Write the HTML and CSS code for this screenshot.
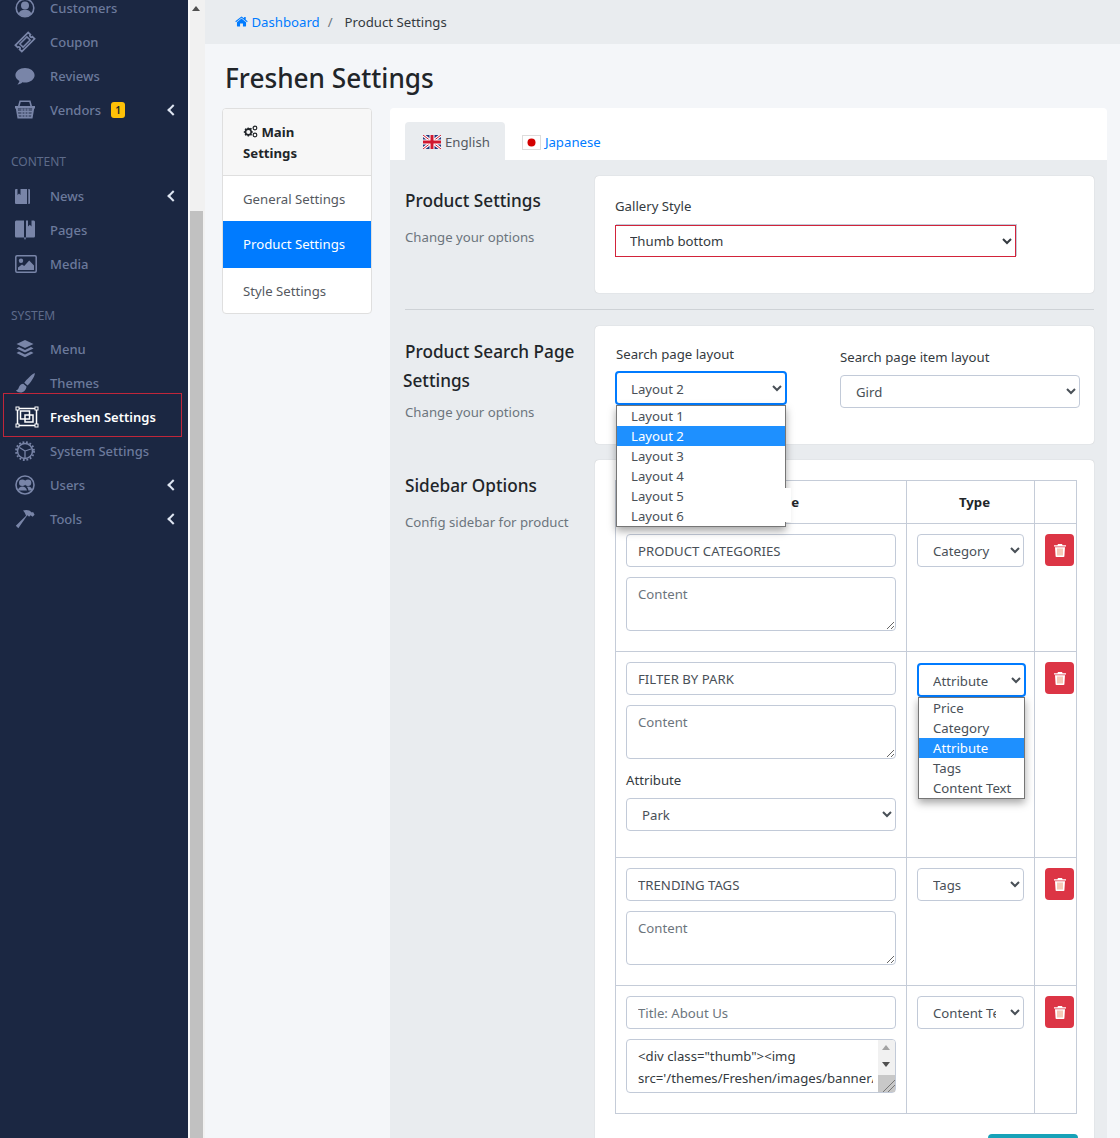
FILE: index.html
```html
<!DOCTYPE html>
<html lang="en">
  <head>
    <meta charset="UTF-8" />
    <meta name="viewport" content="width=device-width, initial-scale=1.0" />
    <title>Freshen Settings</title>
    <link rel="stylesheet" href="styles.css">
  </head>
  <body>
    <aside class="sidebar">
      <ul class="menu">
        <li class="item"><svg viewBox="0 0 20 20"><circle cx="10" cy="10" r="8.8" fill="none" stroke="currentColor" stroke-width="1.6"/><circle cx="10" cy="7.6" r="4" fill="currentColor"/><path d="M3.6 15.6c1-3 3.6-3.9 6.4-3.900s5.400.9 6.400 3.900c-1.500 1.900-3.800 3-6.400 3s-4.900-1.100-6.400-3z" fill="currentColor"/></svg><span>Customers</span></li>
        <li class="item"><svg viewBox="0 0 20 20"><g transform="rotate(-45 10 10)" fill="none" stroke="currentColor"><path d="M1 5.500h18v3a1.500 1.500 0 0 0 0 3v3H1v-3a1.500 1.500 0 0 0 0-3z" stroke-width="1.800"/><rect x="5" y="7.700" width="10" height="4.600" stroke-width="1.500"/></g></svg><span>Coupon</span></li>
        <li class="item"><svg viewBox="0 0 20 20"><path d="M10 2c5.300 0 9.600 3.200 9.600 7.300S15.300 16.600 10 16.600c-.9 0-1.800-.1-2.600-.3C6 17.800 4 18.500 2.400 18.400c1-.9 1.800-2.100 2-3.400C2 13.700.4 11.600.4 9.300.4 5.200 4.700 2 10 2z" fill="currentColor"/></svg><span>Reviews</span></li>
        <li class="item"><svg viewBox="0 0 20 20"><path d="M4.500.500h11l1.500 5.500h3v2.500h-.8L17.500 18.500h-15L.8 8.500H0V6h3zM5.700 2 4.700 6h10.600l-1-4zM2.800 8.500l1.200 8.500h12l1.200-8.500z" fill="currentColor" fill-rule="evenodd"/><path d="M3 9h14v8H4zM3 9" fill="currentColor" opacity=".55"/><path d="M3 11.500h14M3 14.500h14M7 8.500V17M10 8.500V17M13 8.500V17" stroke="currentColor" stroke-width="1.200"/></svg><span>Vendors</span><b class="badge">1</b><i class="arrow"></i></li>
      </ul>
      <h6 class="group">CONTENT</h6>
      <ul class="menu">
        <li class="item"><svg viewBox="0 0 20 20"><path d="M1 3h11v15H1a1 1 0 0 1-1-1V4a1 1 0 0 1 1-1zM2.500 3v6L4 7.600 5.500 9V3zM13.300 3H14a1 1 0 0 1 1 1v13a1 1 0 0 1-1 1h-.7z" fill="currentColor" fill-rule="evenodd"/></svg><span>News</span><i class="arrow"></i></li>
        <li class="item"><svg viewBox="0 0 20 20"><path d="M0 2C0 1 .8.500 1.500.500H9v17H1.500C.8 17.500 0 17 0 16zM11 .500h2v6l1.800-1.800L16.500 6.500v-6h2c.8 0 1.500.5 1.500 1.500v14c0 1-.7 1.500-1.500 1.500H11z" fill="currentColor" fill-rule="evenodd"/><path d="M8.800 17.500h2.400L10 20z" fill="currentColor"/></svg><span>Pages</span></li>
        <li class="item"><svg viewBox="0 0 20 20"><rect x=".8" y="1.800" width="20.400" height="16.400" rx="1.200" fill="none" stroke="currentColor" stroke-width="1.500"/><circle cx="6" cy="6.800" r="2.200" fill="currentColor"/><path d="M3 16v-2.500l4-3 2.200 1.500 5-5.500L19 11.500V16z" fill="currentColor"/></svg><span>Media</span></li>
      </ul>
      <h6 class="group short">SYSTEM</h6>
      <ul class="menu">
        <li class="item"><svg viewBox="0 0 20 20"><path d="M10 1l8.500 4L10 9 1.500 5z" fill="currentColor"/><path d="M4 8 10 10.900 16 8l2.500 1.400L10 13.600 1.500 9.400zM4 12.600l6 2.900 6-2.900 2.500 1.400L10 18.300 1.500 14z" fill="currentColor"/></svg><span>Menu</span></li>
        <li class="item"><svg viewBox="0 0 20 20"><path d="M19.500 0c.6.600.2 2.200-.6 3.800-1.500 3-4 6.700-6.400 8.700L9.300 9.700C11.300 6.700 17 1.200 19.500 0zM8.300 10.700l3.200 2.800c-.2 3.300-2.700 6-6 6-1.900 0-3.700-.7-4.500-2.200 1.600-.2 2.200-1.100 2.700-2.600.9-2.500 2.600-4 4.600-4z" fill="currentColor"/></svg><span>Themes</span></li>
        <li class="item active">
          <svg class="frame" viewBox="0 0 24 22"><rect x="2.500" y="2.500" width="19" height="17" fill="none" stroke="#fff" stroke-width="1.500"/><rect x="5.500" y="5" width="9" height="8" fill="none" stroke="#fff" stroke-width="1.500"/><rect x="10" y="9" width="8" height="7" fill="none" stroke="#fff" stroke-width="1.500"/><rect x="1" y="1" width="3" height="3" fill="#1b2742" stroke="#fff"/><rect x="20" y="1" width="3" height="3" fill="#1b2742" stroke="#fff"/><rect x="1" y="18" width="3" height="3" fill="#1b2742" stroke="#fff"/><rect x="20" y="18" width="3" height="3" fill="#1b2742" stroke="#fff"/></svg>
          <span>Freshen Settings</span>
        </li>
        <li class="item"><svg viewBox="0 0 20 20"><circle cx="10" cy="10" r="7.500" fill="none" stroke="currentColor" stroke-width="1.500"/><circle cx="10" cy="10" r="9" fill="none" stroke="currentColor" stroke-width="1.800" stroke-dasharray="1.800 1.800"/><path d="M10 10 4.500 6.500M10 10l6-2M10 10v7.500" stroke="currentColor" stroke-width="1.300"/></svg><span>System Settings</span></li>
        <li class="item"><svg viewBox="0 0 20 20"><circle cx="10" cy="10" r="9" fill="none" stroke="currentColor" stroke-width="1.600"/><circle cx="7.300" cy="7.800" r="3.300" fill="currentColor"/><circle cx="13" cy="7.800" r="3.300" fill="currentColor"/><path d="M2.800 15.500c.5-2.800 2.600-4 4.600-4s4.100 1.200 4.600 4zM13.300 11.500c2 0 3.700 1.200 4.100 4h-4c-.2-1.500-.8-2.900-1.800-3.700z" fill="currentColor"/></svg><span>Users</span><i class="arrow"></i></li>
        <li class="item"><svg viewBox="0 0 20 20"><path d="M8 1.500c3-1.200 6.800-.7 8.800 1.900l1.300-.4 1.500 2.700-2 2-2-1.500-1.500 1.500-1.800-1.400L3.300 19.300.8 16.800 11 6.700C10.500 5 9.500 3 8 1.500z" fill="currentColor"/></svg><span>Tools</span><i class="arrow"></i></li>
      </ul>
    </aside>

    <div class="scrollbar">
      <i class="scroll-up"></i>
      <div class="scroll-thumb"></div>
    </div>

    <main class="page">
      <nav class="crumbs">
        <a href="#"><svg class="home" viewBox="0 0 20 16"><path d="M10 3.500 3 9.300V15a.6.6 0 0 0 .6.6h4.200v-4.500h4.400v4.500h4.200a.6.6 0 0 0 .6-.6V9.300zM19.500 7.700 16.500 5.200V1h-2.500v2.100L10 .3.500 7.700l1 1.300L10 2.200 18.500 9z" fill="currentColor"/></svg> Dashboard</a>
        <span class="slash">/</span>
        <span>Product Settings</span>
      </nav>
      <h1>Freshen Settings</h1>

      <div class="columns">
        <div class="side-card">
          <div class="side-head"><svg class="gears" viewBox="0 0 16 14"><path d="M6 3 7.500 3.500l1-.6 1 1-.6 1L9.500 6.500 10.500 7v1.200l-1 .4-.4 1 .6 1-1 1-1-.6L6.800 11.400 6.400 12.500H5l-.4-1.100-1-.4-1 .6-1-1 .6-1-.4-1L.7 8.200V7l1.100-.5.400-1-.6-1 1-1 1 .6 1-.5.4-1H6zM5.700 5.300a2.200 2.200 0 1 0 0 4.400 2.200 2.200 0 0 0 0-4.400z" fill="currentColor" fill-rule="evenodd"/><circle cx="12.800" cy="3.300" r="2" fill="none" stroke="currentColor" stroke-width="1.300"/><circle cx="12.800" cy="10.700" r="2" fill="none" stroke="currentColor" stroke-width="1.300"/></svg> Main Settings</div>
          <a class="side-link" href="#">General Settings</a>
          <a class="side-link current" href="#">Product Settings</a>
          <a class="side-link" href="#">Style Settings</a>
        </div>

        <div class="main-card">
          <div class="tabs">
            <a class="tab open" href="#">
              <svg class="flag" viewBox="0 0 18 14"><rect width="18" height="14" fill="#24357a"/><path d="M0 0 18 14M18 0 0 14" stroke="#fff" stroke-width="3"/><path d="M0 0 18 14M18 0 0 14" stroke="#d0182f" stroke-width="1"/><path d="M9 0v14M0 7h18" stroke="#fff" stroke-width="5"/><path d="M9 0v14M0 7h18" stroke="#d0182f" stroke-width="3"/></svg>
              English
            </a>
            <a class="tab" href="#">
              <svg class="flag jp" viewBox="0 0 19 15"><rect x=".5" y=".5" width="18" height="14" fill="#fff" stroke="#ddd"/><circle cx="9.500" cy="7.500" r="4" fill="#d30000"/></svg>
              Japanese
            </a>
          </div>

          <div class="tab-body">
            <section class="row first">
              <div class="intro">
                <h3>Product Settings</h3>
                <p>Change your options</p>
              </div>
              <div class="box gallery">
                <label>Gallery Style</label>
                <select class="plain"><option>Thumb bottom</option></select>
              </div>
            </section>

            <section class="row second">
              <div class="intro">
                <h3 class="wrapped">Product Search Page Settings</h3>
                <p>Change your options</p>
              </div>
              <div class="box search">
                <div class="field">
                  <label>Search page layout</label>
                  <select class="input focus"><option>Layout 2</option></select>
                </div>
                <div class="field lower">
                  <label>Search page item layout</label>
                  <select class="input"><option>Gird</option></select>
                </div>
              </div>
            </section>

            <section class="row third">
              <div class="intro">
                <h3>Sidebar Options</h3>
                <p>Config sidebar for product</p>
              </div>
              <div class="box options">
                <table>
                  <thead>
                    <tr><th>Block Title</th><th>Type</th><th></th></tr>
                  </thead>
                  <tbody>
                    <tr>
                      <td>
                        <input class="input" value="PRODUCT CATEGORIES">
                        <textarea class="input area" placeholder="Content"></textarea>
                      </td>
                      <td><select class="input"><option>Category</option></select></td>
                      <td><button class="del"><svg viewBox="0 0 12 13"><path d="M4 0h4l.6 1.200H12v1.300H0V1.200h3.400zM1 3.200h10l-.6 9a.8.8 0 0 1-.8.800H2.400a.8.8 0 0 1-.8-.8z" fill="#fff"/><rect x="3" y="4.500" width="6" height="7" fill="#f6c9b8"/></svg></button></td>
                    </tr>
                    <tr>
                      <td>
                        <input class="input" value="FILTER BY PARK">
                        <textarea class="input area" placeholder="Content"></textarea>
                        <label class="attr">Attribute</label>
                        <select class="input attr-select"><option>Park</option></select>
                      </td>
                      <td><select class="input focus wide"><option>Attribute</option></select></td>
                      <td><button class="del"><svg viewBox="0 0 12 13"><path d="M4 0h4l.6 1.200H12v1.300H0V1.200h3.400zM1 3.200h10l-.6 9a.8.8 0 0 1-.8.800H2.400a.8.8 0 0 1-.8-.8z" fill="#fff"/><rect x="3" y="4.500" width="6" height="7" fill="#f6c9b8"/></svg></button></td>
                    </tr>
                    <tr>
                      <td>
                        <input class="input" value="TRENDING TAGS">
                        <textarea class="input area" placeholder="Content"></textarea>
                      </td>
                      <td><select class="input"><option>Tags</option></select></td>
                      <td><button class="del"><svg viewBox="0 0 12 13"><path d="M4 0h4l.6 1.200H12v1.300H0V1.200h3.400zM1 3.200h10l-.6 9a.8.8 0 0 1-.8.800H2.400a.8.8 0 0 1-.8-.8z" fill="#fff"/><rect x="3" y="4.500" width="6" height="7" fill="#f6c9b8"/></svg></button></td>
                    </tr>
                    <tr>
                      <td>
                        <input class="input" placeholder="Title: About Us">
                        <div class="code-wrap">
                          <textarea class="input area code" wrap="off">&lt;div class="thumb"&gt;&lt;img
src='/themes/Freshen/images/banner/about.jpg' /&gt;&lt;/div&gt;</textarea>
                          <div class="fake-scroll"><i class="up"></i><i class="down"></i><b></b></div>
                        </div>
                      </td>
                      <td><select class="input"><option>Content Text</option></select></td>
                      <td><button class="del"><svg viewBox="0 0 12 13"><path d="M4 0h4l.6 1.200H12v1.300H0V1.200h3.400zM1 3.200h10l-.6 9a.8.8 0 0 1-.8.800H2.400a.8.8 0 0 1-.8-.8z" fill="#fff"/><rect x="3" y="4.500" width="6" height="7" fill="#f6c9b8"/></svg></button></td>
                    </tr>
                  </tbody>
                </table>
                <div class="actions"><button class="add" aria-label="Add"></button></div>
              </div>
            </section>
          </div>
        </div>
      </div>
    </main>

    <!-- opened select lists -->
    <ul class="popup layouts">
      <li>Layout 1</li>
      <li class="on">Layout 2</li>
      <li>Layout 3</li>
      <li>Layout 4</li>
      <li>Layout 5</li>
      <li>Layout 6</li>
    </ul>
    <ul class="popup types">
      <li>Price</li>
      <li>Category</li>
      <li class="on">Attribute</li>
      <li>Tags</li>
      <li>Content Text</li>
    </ul>
  </body>
</html>
```
FILE: styles.css
```css
* {
  box-sizing: border-box;
}
body {
  margin: 0;
  height: 1138px;
  overflow: hidden;
  display: flex;
  background: #f4f6f9;
  color: #212529;
  font-family: "Noto Sans", "Open Sans", sans-serif;
  font-size: 13.2px;
  line-height: 20px;
}
a {
  text-decoration: none;
  color: #007bff;
}
ul {
  list-style: none;
  margin: 0;
  padding: 0;
}

/* left menu */
.sidebar {
  width: 188px;
  flex: none;
  background: #1b2742;
  color: #6c7a9c;
  padding-top: 1px;
}
.sidebar .menu:first-child {
  margin-top: -10px;
}
.item {
  position: relative;
  display: flex;
  align-items: center;
  height: 34px;
  padding-left: 15px;
  font-size: 13px;
  font-weight: 500;
  svg {
    width: 20px;
    height: 20px;
    flex: none;
    margin-right: 15px;
    overflow: visible;
    color: #7985a8;
  }
  &.active {
    color: #fff;
    font-weight: 600;
    margin: -7px 6px -3px 3px;
    padding: 4px 0 0 12px;
    height: 44px;
    background: #1b2742;
    border: 1px solid #c0263a;
    z-index: 1;
    .frame {
      width: 24px;
      height: 22px;
      margin-right: 11px;
      margin-left: -1px;
    }
  }
}
.badge {
  width: 14px;
  height: 16px;
  margin-left: 10px;
  border-radius: 3px;
  background: #ffc107;
  color: #212529;
  font-size: 10px;
  line-height: 16px;
  text-align: center;
  font-weight: 600;
}
.arrow {
  position: absolute;
  right: 11px;
  top: 13px;
  width: 8px;
  height: 8px;
  border-left: 2px solid #dfe6f2;
  border-bottom: 2px solid #dfe6f2;
  transform: rotate(45deg);
}
.group {
  margin: 0;
  padding: 25px 0 0 11px;
  height: 52px;
  font-size: 12px;
  font-weight: 400;
  color: #5e6b8a;
  line-height: 20px;
  &.short {
    height: 51px;
  }
}

/* window scrollbar */
.scrollbar {
  position: relative;
  width: 17px;
  flex: none;
  background: #f1f1f1;
  border-left: 2px solid #fafafa;
}
.scroll-up {
  position: absolute;
  top: 6px;
  left: 2px;
  border: 4px solid transparent;
  border-top: 0;
  border-bottom: 5px solid #505050;
}
.scroll-thumb {
  margin-top: 211px;
  height: 927px;
  width: 13px;
  background: #c1c1c1;
}

/* page */
.page {
  flex: 1;
  min-width: 0;
}
.crumbs {
  height: 44px;
  background: #e9ecef;
  display: flex;
  align-items: center;
  padding-left: 30px;
  color: #343a40;
  .home {
    width: 13px;
    height: 11px;
  }
  .slash {
    margin: 0 12px 0 8px;
    color: #6c757d;
  }
}
h1 {
  margin: 16px 0 12px 20px;
  font-size: 26.2px;
  line-height: 36px;
  font-weight: 500;
  color: #212529;
}
.columns {
  display: flex;
  align-items: flex-start;
  padding-left: 17px;
  gap: 18px;
}
.side-card {
  width: 150px;
  flex: none;
  background: #fff;
  border: 1px solid #dfdfdf;
  border-radius: 4px;
  overflow: hidden;
}
.side-head {
  background: #f7f7f7;
  border-bottom: 1px solid #dfdfdf;
  padding: 13px 20px 11px;
  font-weight: 700;
  line-height: 21px;
  .gears {
    width: 15px;
    height: 13px;
    vertical-align: -1px;
  }
}
.side-link {
  display: block;
  height: 45px;
  line-height: 46px;
  padding-left: 20px;
  color: #55595f;
  &.current {
    background: #007bff;
    color: #fff;
    height: 47px;
  }
}
.main-card {
  width: 717px;
  flex: none;
  background: #fff;
  border-radius: 4px 4px 0 0;
}
.tabs {
  display: flex;
  height: 52px;
  padding: 14px 0 0 15px;
}
.tab {
  display: flex;
  align-items: center;
  height: 38px;
  padding: 2px 17px 0;
  border-radius: 4px 4px 0 0;
  &.open {
    background: #e9ecef;
    color: #55595f;
    padding: 2px 15px 0 18px;
  }
}
.flag {
  width: 18px;
  height: 14px;
  margin-right: 4px;
  &.jp {
    width: 19px;
    height: 15px;
  }
}
.tab-body {
  background: #e9ecef;
  padding: 16px 13px 0 15px;
  height: 1000px;
}
.row {
  display: flex;
}
.intro {
  width: 190px;
  flex: none;
  h3 {
    margin: 10px 0 0;
    font-size: 17.2px;
    line-height: 30px;
    font-weight: 500;
    color: #212529;
  }
  p {
    margin: 11px 0 0;
    color: #6c757d;
  }
}
.box {
  flex: 1;
  background: #fff;
  border-radius: 4px;
  box-shadow: 0 0 1px rgba(0, 0, 0, 0.25);
}
label {
  display: block;
  color: #343a40;
}
.input {
  display: block;
  width: 100%;
  height: 33px;
  padding: 0 11px;
  background: #fff;
  border: 1px solid #c2cad8;
  border-radius: 4px;
  color: #495057;
  font: inherit;
}
.input.focus {
  border: 2px solid #007bff;
  height: 34px;
  padding: 2px 10px 0;
}
.input::placeholder {
  color: #6c757d;
}
.first {
  padding-bottom: 16px;
  border-bottom: 1px solid #ced2d6;
  .gallery {
    height: 117px;
    padding: 20px 20px 0;
  }
  label {
    margin-bottom: 9px;
  }
}
.plain {
  display: block;
  width: 401px;
  height: 32px;
  padding: 0 10px;
  background: #fff;
  border: 1px solid #d2233a;
  box-shadow: 1px -1px 0 #c2cad8;
  color: #343a40;
  font: inherit;
}
.second {
  margin-top: 16px;
  .intro h3 {
    margin: 11px 0 0 -2px;
    text-indent: 2px;
    line-height: 29px;
  }
  .intro p {
    margin-top: 7px;
  }
  .search {
    display: flex;
    gap: 53px;
    height: 118px;
    padding: 18px 14px 0 20px;
  }
  .field {
    width: 172px;
    label {
      margin: 0 0 7px 1px;
    }
  }
  .lower {
    width: 240px;
    padding-top: 3px;
    label {
      margin: 0 0 8px;
    }
  }
}
.third {
  margin-top: 16px;
  .intro h3 {
    margin-top: 11px;
  }
  .intro p {
    margin-top: 11px;
  }
  .options {
    padding: 20px 17px 0 20px;
  }
}
table {
  width: 100%;
  border-collapse: collapse;
  table-layout: fixed;
  th,
  td {
    border: 1px solid #c5ccd8;
    vertical-align: top;
    padding: 10px;
  }
  td:nth-child(1) {
    padding-bottom: 20px;
  }
  th {
    height: 43px;
    text-align: center;
    font-weight: 700;
    vertical-align: middle;
  }
  th:nth-child(1) {
    width: 291px;
    padding-left: 18px;
  }
  th:nth-child(2) {
    width: 128px;
    padding-left: 18px;
  }
}
.area {
  height: 54px;
  margin-top: 10px;
  padding: 6px 11px;
  resize: vertical;
  &.code {
    color: #343a40;
    line-height: 22px;
    padding: 5px 11px;
    overflow: hidden;
    resize: none;
  }
}
.attr {
  margin: 11px 0 8px;
}
.attr-select {
  margin-bottom: 6px;
}
.wide {
  width: calc(100% + 2px);
  margin-top: 1px;
}
.code-wrap {
  position: relative;
}
.fake-scroll {
  position: absolute;
  top: 1px;
  right: 1px;
  bottom: 1px;
  width: 22px;
  background: #f1f1f1;
  border-left: 5px solid #fff;
  border-radius: 0 3px 3px 0;
  i {
    position: absolute;
    left: 4px;
    border: 4px solid transparent;
  }
  .up {
    top: 5px;
    border-top: 0;
    border-bottom: 5px solid #a3a3a3;
  }
  .down {
    top: 22px;
    border-bottom: 0;
    border-top: 5px solid #505050;
  }
  b {
    position: absolute;
    left: 0;
    right: 0;
    bottom: 0;
    height: 17px;
    background:
      linear-gradient(135deg, transparent 62%, #777 62%, #777 66%, transparent 66%, transparent 78%, #777 78%, #777 82%, transparent 82%),
      #c8c8c8;
  }
}
.del {
  display: block;
  width: 29px;
  height: 32px;
  padding: 0;
  background: #dc3545;
  border: 0;
  border-radius: 4px;
  svg {
    width: 12px;
    height: 13px;
    vertical-align: middle;
  }
}
.actions {
  display: flex;
  justify-content: flex-end;
  margin: 20px -1px 0 0;
}
.add {
  width: 90px;
  height: 38px;
  background: #17a2b8;
  border: 0;
  border-radius: 4px;
}

/* opened select lists */
.popup {
  position: absolute;
  background: #fff;
  border: 1px solid #767676;
  box-shadow: 0 4px 8px rgba(0, 0, 0, 0.35);
  color: #495057;
  li {
    height: 20px;
    line-height: 20px;
    padding-left: 14px;
  }
  .on {
    background: #1e90ff;
    color: #fff;
  }
}
.layouts {
  left: 616px;
  top: 405px;
  width: 170px;
  &::after {
    content: "";
    position: absolute;
    left: 100%;
    top: 82px;
    width: 6px;
    height: 34px;
    background: #fff;
  }
}
.types {
  left: 918px;
  top: 697px;
  width: 107px;
}
```
